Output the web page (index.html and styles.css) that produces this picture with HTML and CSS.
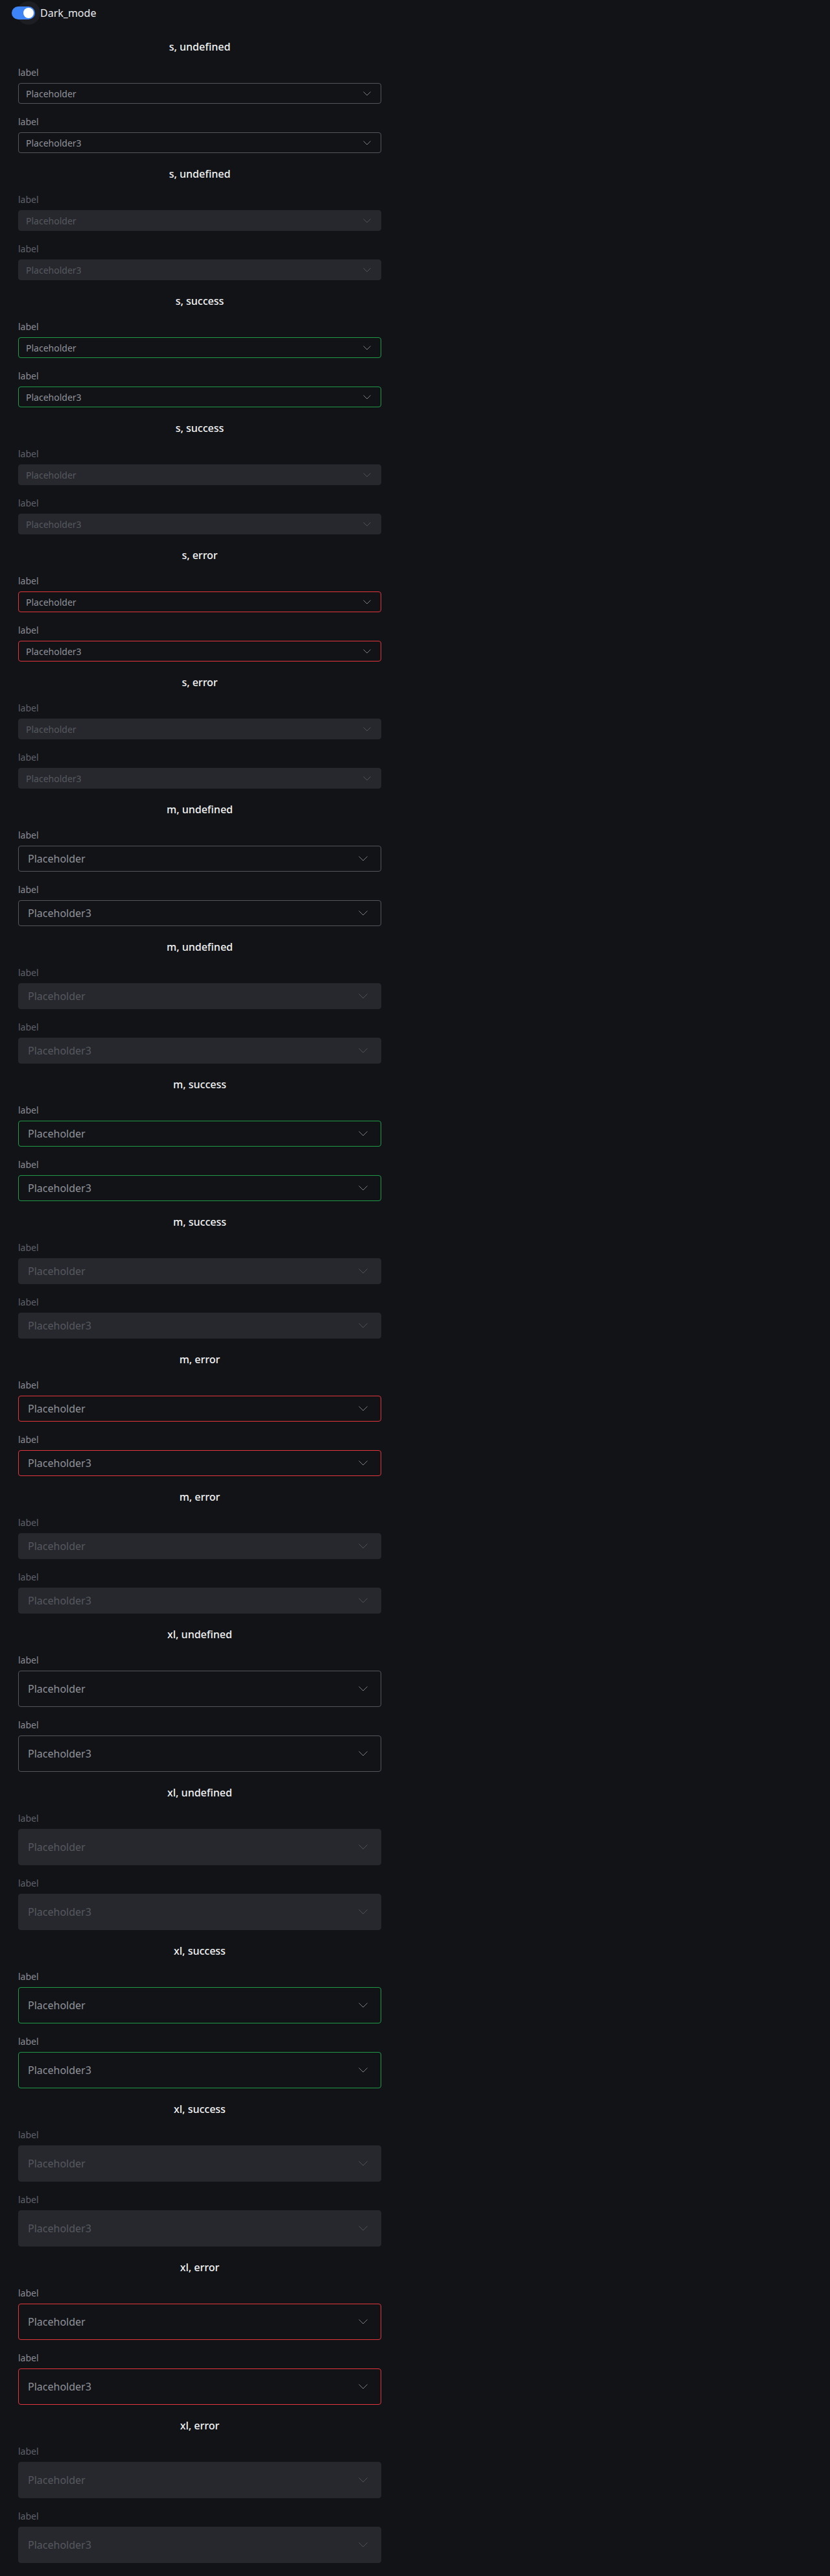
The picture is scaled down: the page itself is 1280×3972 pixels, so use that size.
FILE: index.html
```html
<!DOCTYPE html>
<html lang="en">
<head>
<meta charset="utf-8">
<title>Select</title>
<link rel="stylesheet" href="styles.css">
</head>
<body>
<header class="topbar">
  <div class="toggle">
    <span class="toggle-halo"></span>
    <span class="toggle-track"><span class="toggle-thumb"></span></span>
  </div>
  <span class="toggle-label">Dark_mode</span>
</header>
<main class="page">

  <section class="group size-s">
    <h2 class="group-title">s, undefined</h2>
    <div class="field"><div class="label">label</div><div class="select"><span class="ph">Placeholder</span><svg class="chev" viewBox="0 0 12 7"><path d="M0.5 0.5 L6 6 L11.5 0.5"/></svg></div></div>
    <div class="field"><div class="label">label</div><div class="select"><span class="ph">Placeholder3</span><svg class="chev" viewBox="0 0 12 7"><path d="M0.5 0.5 L6 6 L11.5 0.5"/></svg></div></div>
  </section>

  <section class="group size-s disabled">
    <h2 class="group-title">s, undefined</h2>
    <div class="field"><div class="label">label</div><div class="select"><span class="ph">Placeholder</span><svg class="chev" viewBox="0 0 12 7"><path d="M0.5 0.5 L6 6 L11.5 0.5"/></svg></div></div>
    <div class="field"><div class="label">label</div><div class="select"><span class="ph">Placeholder3</span><svg class="chev" viewBox="0 0 12 7"><path d="M0.5 0.5 L6 6 L11.5 0.5"/></svg></div></div>
  </section>

  <section class="group size-s success">
    <h2 class="group-title">s, success</h2>
    <div class="field"><div class="label">label</div><div class="select"><span class="ph">Placeholder</span><svg class="chev" viewBox="0 0 12 7"><path d="M0.5 0.5 L6 6 L11.5 0.5"/></svg></div></div>
    <div class="field"><div class="label">label</div><div class="select"><span class="ph">Placeholder3</span><svg class="chev" viewBox="0 0 12 7"><path d="M0.5 0.5 L6 6 L11.5 0.5"/></svg></div></div>
  </section>

  <section class="group size-s disabled">
    <h2 class="group-title">s, success</h2>
    <div class="field"><div class="label">label</div><div class="select"><span class="ph">Placeholder</span><svg class="chev" viewBox="0 0 12 7"><path d="M0.5 0.5 L6 6 L11.5 0.5"/></svg></div></div>
    <div class="field"><div class="label">label</div><div class="select"><span class="ph">Placeholder3</span><svg class="chev" viewBox="0 0 12 7"><path d="M0.5 0.5 L6 6 L11.5 0.5"/></svg></div></div>
  </section>

  <section class="group size-s error">
    <h2 class="group-title">s, error</h2>
    <div class="field"><div class="label">label</div><div class="select"><span class="ph">Placeholder</span><svg class="chev" viewBox="0 0 12 7"><path d="M0.5 0.5 L6 6 L11.5 0.5"/></svg></div></div>
    <div class="field"><div class="label">label</div><div class="select"><span class="ph">Placeholder3</span><svg class="chev" viewBox="0 0 12 7"><path d="M0.5 0.5 L6 6 L11.5 0.5"/></svg></div></div>
  </section>

  <section class="group size-s disabled">
    <h2 class="group-title">s, error</h2>
    <div class="field"><div class="label">label</div><div class="select"><span class="ph">Placeholder</span><svg class="chev" viewBox="0 0 12 7"><path d="M0.5 0.5 L6 6 L11.5 0.5"/></svg></div></div>
    <div class="field"><div class="label">label</div><div class="select"><span class="ph">Placeholder3</span><svg class="chev" viewBox="0 0 12 7"><path d="M0.5 0.5 L6 6 L11.5 0.5"/></svg></div></div>
  </section>

  <section class="group size-m">
    <h2 class="group-title">m, undefined</h2>
    <div class="field"><div class="label">label</div><div class="select"><span class="ph">Placeholder</span><svg class="chev" viewBox="0 0 14 8"><path d="M0.5 0.5 L7 7 L13.5 0.5"/></svg></div></div>
    <div class="field"><div class="label">label</div><div class="select"><span class="ph">Placeholder3</span><svg class="chev" viewBox="0 0 14 8"><path d="M0.5 0.5 L7 7 L13.5 0.5"/></svg></div></div>
  </section>

  <section class="group size-m disabled">
    <h2 class="group-title">m, undefined</h2>
    <div class="field"><div class="label">label</div><div class="select"><span class="ph">Placeholder</span><svg class="chev" viewBox="0 0 14 8"><path d="M0.5 0.5 L7 7 L13.5 0.5"/></svg></div></div>
    <div class="field"><div class="label">label</div><div class="select"><span class="ph">Placeholder3</span><svg class="chev" viewBox="0 0 14 8"><path d="M0.5 0.5 L7 7 L13.5 0.5"/></svg></div></div>
  </section>

  <section class="group size-m success">
    <h2 class="group-title">m, success</h2>
    <div class="field"><div class="label">label</div><div class="select"><span class="ph">Placeholder</span><svg class="chev" viewBox="0 0 14 8"><path d="M0.5 0.5 L7 7 L13.5 0.5"/></svg></div></div>
    <div class="field"><div class="label">label</div><div class="select"><span class="ph">Placeholder3</span><svg class="chev" viewBox="0 0 14 8"><path d="M0.5 0.5 L7 7 L13.5 0.5"/></svg></div></div>
  </section>

  <section class="group size-m disabled">
    <h2 class="group-title">m, success</h2>
    <div class="field"><div class="label">label</div><div class="select"><span class="ph">Placeholder</span><svg class="chev" viewBox="0 0 14 8"><path d="M0.5 0.5 L7 7 L13.5 0.5"/></svg></div></div>
    <div class="field"><div class="label">label</div><div class="select"><span class="ph">Placeholder3</span><svg class="chev" viewBox="0 0 14 8"><path d="M0.5 0.5 L7 7 L13.5 0.5"/></svg></div></div>
  </section>

  <section class="group size-m error">
    <h2 class="group-title">m, error</h2>
    <div class="field"><div class="label">label</div><div class="select"><span class="ph">Placeholder</span><svg class="chev" viewBox="0 0 14 8"><path d="M0.5 0.5 L7 7 L13.5 0.5"/></svg></div></div>
    <div class="field"><div class="label">label</div><div class="select"><span class="ph">Placeholder3</span><svg class="chev" viewBox="0 0 14 8"><path d="M0.5 0.5 L7 7 L13.5 0.5"/></svg></div></div>
  </section>

  <section class="group size-m disabled">
    <h2 class="group-title">m, error</h2>
    <div class="field"><div class="label">label</div><div class="select"><span class="ph">Placeholder</span><svg class="chev" viewBox="0 0 14 8"><path d="M0.5 0.5 L7 7 L13.5 0.5"/></svg></div></div>
    <div class="field"><div class="label">label</div><div class="select"><span class="ph">Placeholder3</span><svg class="chev" viewBox="0 0 14 8"><path d="M0.5 0.5 L7 7 L13.5 0.5"/></svg></div></div>
  </section>

  <section class="group size-xl">
    <h2 class="group-title">xl, undefined</h2>
    <div class="field"><div class="label">label</div><div class="select"><span class="ph">Placeholder</span><svg class="chev" viewBox="0 0 14 8"><path d="M0.5 0.5 L7 7 L13.5 0.5"/></svg></div></div>
    <div class="field"><div class="label">label</div><div class="select"><span class="ph">Placeholder3</span><svg class="chev" viewBox="0 0 14 8"><path d="M0.5 0.5 L7 7 L13.5 0.5"/></svg></div></div>
  </section>

  <section class="group size-xl disabled">
    <h2 class="group-title">xl, undefined</h2>
    <div class="field"><div class="label">label</div><div class="select"><span class="ph">Placeholder</span><svg class="chev" viewBox="0 0 14 8"><path d="M0.5 0.5 L7 7 L13.5 0.5"/></svg></div></div>
    <div class="field"><div class="label">label</div><div class="select"><span class="ph">Placeholder3</span><svg class="chev" viewBox="0 0 14 8"><path d="M0.5 0.5 L7 7 L13.5 0.5"/></svg></div></div>
  </section>

  <section class="group size-xl success">
    <h2 class="group-title">xl, success</h2>
    <div class="field"><div class="label">label</div><div class="select"><span class="ph">Placeholder</span><svg class="chev" viewBox="0 0 14 8"><path d="M0.5 0.5 L7 7 L13.5 0.5"/></svg></div></div>
    <div class="field"><div class="label">label</div><div class="select"><span class="ph">Placeholder3</span><svg class="chev" viewBox="0 0 14 8"><path d="M0.5 0.5 L7 7 L13.5 0.5"/></svg></div></div>
  </section>

  <section class="group size-xl disabled">
    <h2 class="group-title">xl, success</h2>
    <div class="field"><div class="label">label</div><div class="select"><span class="ph">Placeholder</span><svg class="chev" viewBox="0 0 14 8"><path d="M0.5 0.5 L7 7 L13.5 0.5"/></svg></div></div>
    <div class="field"><div class="label">label</div><div class="select"><span class="ph">Placeholder3</span><svg class="chev" viewBox="0 0 14 8"><path d="M0.5 0.5 L7 7 L13.5 0.5"/></svg></div></div>
  </section>

  <section class="group size-xl error">
    <h2 class="group-title">xl, error</h2>
    <div class="field"><div class="label">label</div><div class="select"><span class="ph">Placeholder</span><svg class="chev" viewBox="0 0 14 8"><path d="M0.5 0.5 L7 7 L13.5 0.5"/></svg></div></div>
    <div class="field"><div class="label">label</div><div class="select"><span class="ph">Placeholder3</span><svg class="chev" viewBox="0 0 14 8"><path d="M0.5 0.5 L7 7 L13.5 0.5"/></svg></div></div>
  </section>

  <section class="group size-xl disabled">
    <h2 class="group-title">xl, error</h2>
    <div class="field"><div class="label">label</div><div class="select"><span class="ph">Placeholder</span><svg class="chev" viewBox="0 0 14 8"><path d="M0.5 0.5 L7 7 L13.5 0.5"/></svg></div></div>
    <div class="field"><div class="label">label</div><div class="select"><span class="ph">Placeholder3</span><svg class="chev" viewBox="0 0 14 8"><path d="M0.5 0.5 L7 7 L13.5 0.5"/></svg></div></div>
  </section>

</main>
</body>
</html>
```

FILE: styles.css
```css
* { box-sizing: border-box; }

html, body {
  margin: 0;
  padding: 0;
  background: #121317;
}

body {
  font-family: "Noto Sans", "Open Sans", Arial, sans-serif;
  color: #e8e9ec;
}

.topbar {
  height: 40px;
  display: flex;
  align-items: center;
  padding-left: 18px;
  gap: 8px;
}

.toggle {
  position: relative;
  width: 36px;
  height: 20px;
}

.toggle-halo {
  position: absolute;
  left: 8px;
  top: -8px;
  width: 36px;
  height: 36px;
  border-radius: 50%;
  background: #1d1e23;
}

.toggle-track {
  position: absolute;
  inset: 0;
  border-radius: 10px;
  background: #3d84f7;
}

.toggle-thumb {
  position: absolute;
  right: 2px;
  top: 2px;
  width: 16px;
  height: 16px;
  border-radius: 50%;
  background: #ffffff;
}

.toggle-label {
  font-size: 16px;
  line-height: 24px;
  color: #e8e9ec;
}

.page {
  width: 588px;
  padding: 20px 0 20px 28px;
  display: flex;
  flex-direction: column;
  gap: 20px;
}

.group {
  display: flex;
  flex-direction: column;
  gap: 16px;
}

.group-title {
  margin: 0;
  font-size: 16px;
  line-height: 24px;
  font-weight: 500;
  text-align: center;
  color: #f2f3f5;
}

.field {
  display: flex;
  flex-direction: column;
  gap: 4px;
}

.label {
  font-size: 14px;
  line-height: 24px;
  color: #8a8d94;
}

.select {
  display: flex;
  align-items: center;
  justify-content: space-between;
  border: 1px solid #53565d;
  border-radius: 4px;
  background: #121317;
}

.ph {
  color: #8f9299;
}

.chev {
  display: block;
  fill: none;
  stroke: #7d8087;
  stroke-width: 1;
}

.size-s .select {
  height: 32px;
  padding: 0 15px 0 11px;
  font-size: 14px;
}
.size-s .chev { width: 12px; height: 7px; }

.size-m .select {
  height: 40px;
  padding: 0 20px 0 14px;
  font-size: 16px;
}
.size-m .chev,
.size-xl .chev { width: 14px; height: 8px; }

.size-xl .select {
  height: 56px;
  padding: 0 20px 0 14px;
  font-size: 16px;
}

.success .select { border-color: #1f9b48; }
.error .select { border-color: #e2363c; }

.disabled .label { color: #5f626a; }
.disabled .select {
  background: #27282d;
  border-color: #27282d;
}
.disabled .ph { color: #55585f; }
.disabled .chev { stroke: #4f5259; }
```
